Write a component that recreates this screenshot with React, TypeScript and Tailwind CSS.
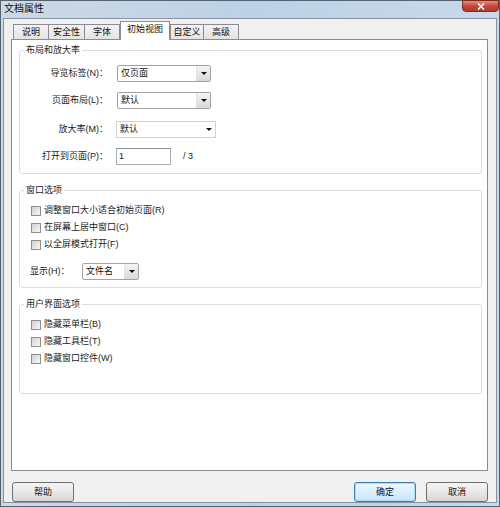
const font = "font-['Liberation_Sans','Noto_Sans_CJK_SC',sans-serif]";

const Arrow = () => (
  <span className="h-0 w-0 border-x-[3px] border-t-[3px] border-x-transparent border-t-[#111]" />
);

const DropList = ({ text, className }: { text: string; className: string }) => (
  <div className={`flex h-[17px] items-center rounded-[2px] border border-[#a2a2a2] bg-white ${className}`}>
    <span className="flex-1 pl-[3px] text-[9px] leading-none text-[#111]">{text}</span>
    <span className="flex h-full w-[14px] items-center justify-center rounded-r-[1px] border-l border-[#e3e3e3] bg-gradient-to-b from-[#f4f4f4] to-[#d9d9d9]">
      <Arrow />
    </span>
  </div>
);

const Check = ({ label }: { label: string }) => (
  <div className="flex h-[17px] items-center gap-[3px] pl-[11px]">
    <span className="flex h-[10px] w-[10px] items-center justify-center border border-[#8e8f8f] bg-white">
      <span className="h-[8px] w-[8px] bg-gradient-to-br from-[#d2d2d2] to-[#f7f7f7]" />
    </span>
    <span className="text-[9px] leading-none text-[#1a1a1a]">{label}</span>
  </div>
);

const Row = ({ label, children, mt }: { label: string; children: React.ReactNode; mt: string }) => (
  <div className={`flex items-center ${mt}`}>
    <div className="w-[88px] text-right text-[9px] leading-none text-[#1a1a1a]">{label}</div>
    <div className="ml-[9px] flex items-center">{children}</div>
  </div>
);

const Group = ({ title, children, className = "" }: { title: string; children: React.ReactNode; className?: string }) => (
  <fieldset className={`ml-[7px] w-[463px] rounded-[3px] border border-[#d5dfe5] ${className}`}>
    <legend className="ml-[4px] px-[2px] text-[9px] leading-[12px] text-[#222]">{title}</legend>
    {children}
  </fieldset>
);

const tabs = ["说明", "安全性", "字体", "初始视图", "自定义", "高级"];
const tabW = ["w-[36px]", "w-[37px]", "w-[36px]", "w-[50px]", "w-[34px]", "w-[36px]"];

export default function App() {
  return (
    <div className={`flex h-[507px] w-[500px] flex-col border border-[#55626f] bg-gradient-to-r from-[#cdd9e5] via-[#bcd1e7] to-[#c8d9ea] px-[2px] pb-[3px] ${font}`}>
      {/* title bar */}
      <div className="flex h-[17px] shrink-0 items-start">
        <span className="pl-[1px] pt-[2px] text-[10px] leading-[12px] text-[#111]">文档属性</span>
        <div className="-mr-[2px] -mt-px ml-auto flex h-[12px] w-[37px] items-center justify-center rounded-b-[4px] border border-[#7d2a22] bg-gradient-to-b from-[#e0907f] via-[#c8473a] to-[#b23a2c]">
          <svg width="8" height="7" viewBox="0 0 8 7">
            <path d="M1 0.5 L7 6.5 M7 0.5 L1 6.5" stroke="white" strokeWidth="1.6" />
          </svg>
        </div>
      </div>

      {/* client area */}
      <div className="flex flex-1 flex-col border border-[#8793a0] bg-[#f0f0f0] pl-[7px] pr-[8px] pt-[2px]">
        <div className="ml-[2px] flex h-[19px] items-end">
          {tabs.map((t, i) =>
            i === 3 ? (
              <div
                key={t}
                className={`relative z-10 flex h-[19px] ${tabW[i]} items-start justify-center border border-b-0 border-[#898c95] bg-white pt-[3px] text-[9px] leading-none text-[#111]`}
              >
                {t}
              </div>
            ) : (
              <div
                key={t}
                className={`mb-px flex h-[15px] ${tabW[i]} items-center justify-center border border-b-0 border-[#898c95] bg-gradient-to-b from-[#f3f3f3] to-[#e3e3e3] text-[9px] leading-none text-[#111] ${i > 0 && i !== 4 ? "-ml-px" : ""}`}
              >
                {t}
              </div>
            )
          )}
        </div>

        <div className="-mt-px h-[432px] w-[477px] border border-[#898c95] bg-white pt-[4px]">
          <Group title="布局和放大率">
            <div className="pb-[8px]">
              <Row label="导览标签(N)：" mt="mt-[9px]">
                <DropList text="仅页面" className="w-[94px]" />
              </Row>
              <Row label="页面布局(L)：" mt="mt-[10px]">
                <DropList text="默认" className="w-[94px]" />
              </Row>
              <Row label="放大率(M)：" mt="mt-[12px]">
                <div className="-ml-px flex h-[17px] w-[100px] items-center border border-[#d0d0d0] bg-white">
                  <span className="flex-1 pl-[3px] text-[9px] leading-none text-[#111]">默认</span>
                  <span className="flex w-[12px] justify-center">
                    <Arrow />
                  </span>
                </div>
              </Row>
              <Row label="打开到页面(P)：" mt="mt-[10px]">
                <div className="-ml-px flex h-[17px] w-[55px] items-center border border-[#abadb3] border-t-[#8e9095] bg-white pl-[2px] text-[9px] leading-none text-[#111]">
                  1
                </div>
                <span className="ml-[12px] text-[9px] leading-none text-[#222]">/ 3</span>
              </Row>
            </div>
          </Group>

          <Group title="窗口选项" className="mt-[10px]">
            <div className="pb-[7px] pt-[6px]">
              <Check label="调整窗口大小适合初始页面(R)" />
              <Check label="在屏幕上居中窗口(C)" />
              <Check label="以全屏模式打开(F)" />
              <div className="mt-[10px] flex items-center pl-[10px]">
                <span className="w-[52px] text-[9px] leading-none text-[#1a1a1a]">显示(H)：</span>
                <DropList text="文件名" className="w-[57px]" />
              </div>
            </div>
          </Group>

          <Group title="用户界面选项" className="mt-[10px]">
            <div className="pb-[26px] pt-[6px]">
              <Check label="隐藏菜单栏(B)" />
              <Check label="隐藏工具栏(T)" />
              <Check label="隐藏窗口控件(W)" />
            </div>
          </Group>
        </div>

        <div className="mt-[11px] flex items-center">
          <button className="ml-px flex h-[20px] w-[62px] items-center justify-center rounded-[3px] border border-[#707070] bg-gradient-to-b from-[#f4f4f4] via-[#e8e8e8] to-[#d6d6d6] text-[9px] leading-none text-[#111]">
            帮助
          </button>
          <button className="ml-auto flex h-[20px] w-[62px] items-center justify-center rounded-[3px] border border-[#3c7fb1] bg-gradient-to-b from-[#eef7fd] via-[#dcefff] to-[#c8e4f8] text-[9px] leading-none text-[#111] shadow-[inset_0_0_0_1px_#a9dcf6]">
            确定
          </button>
          <button className="ml-[10px] flex h-[20px] w-[62px] items-center justify-center rounded-[3px] border border-[#707070] bg-gradient-to-b from-[#f4f4f4] via-[#e8e8e8] to-[#d6d6d6] text-[9px] leading-none text-[#111]">
            取消
          </button>
        </div>
      </div>
    </div>
  );
}
